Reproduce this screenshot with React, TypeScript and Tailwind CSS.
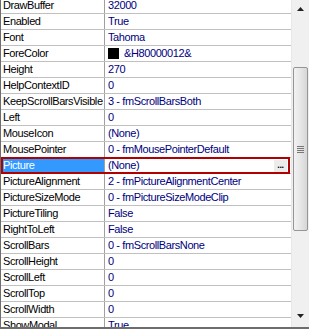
import React from 'react';

type Prop = { name: string; value: string; swatch?: boolean; selected?: boolean };

const props: Prop[] = [
  { name: 'DrawBuffer', value: '32000' },
  { name: 'Enabled', value: 'True' },
  { name: 'Font', value: 'Tahoma' },
  { name: 'ForeColor', value: '&H80000012&', swatch: true },
  { name: 'Height', value: '270' },
  { name: 'HelpContextID', value: '0' },
  { name: 'KeepScrollBarsVisible', value: '3 - fmScrollBarsBoth' },
  { name: 'Left', value: '0' },
  { name: 'MouseIcon', value: '(None)' },
  { name: 'MousePointer', value: '0 - fmMousePointerDefault' },
  { name: 'Picture', value: '(None)', selected: true },
  { name: 'PictureAlignment', value: '2 - fmPictureAlignmentCenter' },
  { name: 'PictureSizeMode', value: '0 - fmPictureSizeModeClip' },
  { name: 'PictureTiling', value: 'False' },
  { name: 'RightToLeft', value: 'False' },
  { name: 'ScrollBars', value: '0 - fmScrollBarsNone' },
  { name: 'ScrollHeight', value: '0' },
  { name: 'ScrollLeft', value: '0' },
  { name: 'ScrollTop', value: '0' },
  { name: 'ScrollWidth', value: '0' },
  { name: 'ShowModal', value: 'True' },
];

const Row: React.FC<{ p: Prop }> = ({ p }) => {
  if (p.selected) {
    return (
      <div className="relative flex h-[16px] shrink-0 border-b border-[#c0c0c0]">
        <div className="flex w-[103px] shrink-0 items-center bg-[#3399ff] pl-[2px] text-white">{p.name}</div>
        <div className="w-px shrink-0 bg-[#a0a0a0]" />
        <div className="flex flex-1 items-center pl-[3px] text-[#000080]">{p.value}</div>
        <div className="pointer-events-none absolute -top-[1px] left-0 right-[1px] bottom-[-1px] border-2 border-[#b00000]" />
        <div className="absolute right-[4px] top-[2px] flex h-[12px] w-[13px] items-end justify-center bg-[#ececec] pb-[2px] text-[9px] font-bold leading-none text-black">
          ...
        </div>
      </div>
    );
  }
  return (
    <div className="flex h-[16px] shrink-0 border-b border-[#c0c0c0]">
      <div className="flex w-[103px] shrink-0 items-center overflow-hidden whitespace-nowrap pl-[2px] text-black">
        {p.name}
      </div>
      <div className="w-px shrink-0 bg-[#a0a0a0]" />
      <div className="flex flex-1 items-center gap-[5px] overflow-hidden whitespace-nowrap pl-[3px] text-[#000080]">
        {p.swatch && <span className="h-[11px] w-[11px] shrink-0 border border-black bg-black" />}
        <span>{p.value}</span>
      </div>
    </div>
  );
};

export default function App() {
  return (
    <div
      className="flex h-[329px] w-[309px] flex-col overflow-hidden bg-white text-[11px] leading-none tracking-[-0.4px]"
      style={{ fontFamily: 'Tahoma, "Liberation Sans", Arial, sans-serif' }}
    >
      <div className="flex h-[327px] shrink-0">
        <div className="w-px shrink-0 bg-[#6d6d6d]" />
        <div className="flex w-[290px] flex-col overflow-hidden">
          <div className="-mt-[2px] flex flex-col">
            {props.map((p) => (
              <Row key={p.name} p={p} />
            ))}
          </div>
        </div>
        <div className="relative flex w-[18px] shrink-0 flex-col items-center border-l border-[#e8e8e8] bg-[#f0f0f0]">
          <div className="flex h-[17px] w-full items-center justify-center">
            <svg width="7" height="4" viewBox="0 0 7 4">
              <path d="M0 4 L3.5 0 L7 4 Z" fill="#222" />
            </svg>
          </div>
          <div className="mt-[50px] flex h-[164px] w-[15px] items-center justify-center rounded-[2px] border border-[#959595] bg-gradient-to-r from-[#f2f2f2] via-[#e6e6e6] to-[#d6d6d6]">
            <svg width="7" height="7" viewBox="0 0 7 7">
              <path d="M0 0.5 H7 M0 2.5 H7 M0 4.5 H7 M0 6.5 H7" stroke="#777" strokeWidth="1" />
            </svg>
          </div>
          <div className="flex flex-1 items-end justify-center pb-[9px]">
            <svg width="7" height="4" viewBox="0 0 7 4">
              <path d="M0 0 L3.5 4 L7 0 Z" fill="#222" />
            </svg>
          </div>
        </div>
      </div>
      <div className="h-[2px] shrink-0 bg-[#6d6d6d]" />
    </div>
  );
}
